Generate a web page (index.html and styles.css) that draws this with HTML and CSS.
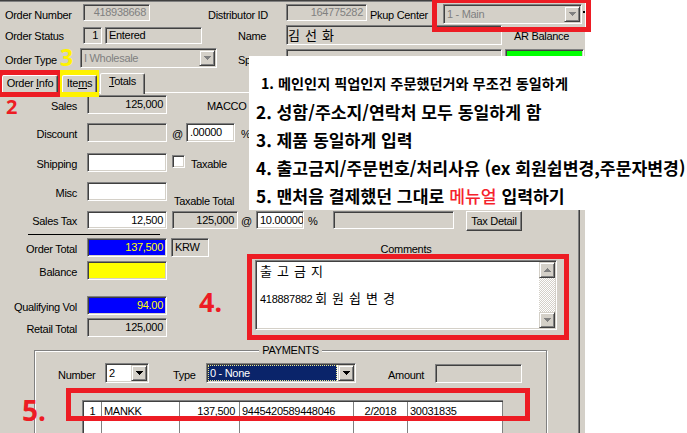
FILE: index.html
```html
<!DOCTYPE html>
<html lang="ko">
<head>
<meta charset="utf-8">
<title>Order Entry</title>
<link rel="stylesheet" href="styles.css">
</head>
<body>
<div class="page">
  <div class="app">
    <div class="strip"></div>

    <div class="hrow r1">
      <span class="lbl w-l1">Order Number</span>
      <span class="fld ro dim num w-ordno">418938668</span>
      <span class="lbl l-dist">Distributor ID</span>
      <span class="fld ro dim num w-dist">164775282</span>
      <span class="lbl l-pkup">Pkup Center</span>
      <span class="combo dis w-pkup"><span class="ctext">1 - Main</span><span class="cbtn"><svg width="7" height="4" viewBox="0 0 7 4"><path d="M0 0H7V1H6V2H5V3H4V4H3V3H2V2H1V1H0Z"/></svg></span></span>
      <span class="dash"></span>
    </div>

    <div class="hrow r2">
      <span class="lbl w-l1">Order Status</span>
      <span class="fld ro num w-st1">1</span>
      <span class="fld ro w-st2">Entered</span>
      <span class="lbl l-name">Name</span>
      <span class="fld ro tall w-name"><span class="ko">김선화</span></span>
      <span class="lbl l-ar">AR Balance</span>
    </div>

    <div class="hrow r3">
      <span class="lbl w-l3">Order Type</span>
      <span class="combo dis w-otype"><span class="ctext">I Wholesale</span><span class="cbtn"><svg width="7" height="4" viewBox="0 0 7 4"><path d="M0 0H7V1H6V2H5V3H4V4H3V3H2V2H1V1H0Z"/></svg></span></span>
      <span class="lbl l-sp">Sponsor</span>
      <span class="fld ro w-sp"></span>
      <span class="fld green w-ar"></span>
    </div>

    <div class="tabs">
      <span class="tab t1">Order <u>I</u>nfo</span>
      <span class="tab t2">Ite<u>m</u>s</span>
      <span class="tab t3 sel"><u>T</u>otals</span>
    </div>

    <div class="pane">
      <div class="frow fr-sales">
        <span class="flbl">Sales</span>
        <span class="fld ro num f-main">125,000</span>
        <span class="plain l-macco">MACCO NV</span>
      </div>
      <div class="frow fr-disc">
        <span class="flbl">Discount</span>
        <span class="fld ro f-main"></span>
        <span class="plain at1">@</span>
        <span class="fld wh w-pct">.00000</span>
        <span class="plain pct1">%</span>
      </div>
      <div class="frow fr-ship">
        <span class="flbl">Shipping</span>
        <span class="fld wh f-main"></span>
        <span class="chk"></span>
        <span class="plain l-taxable">Taxable</span>
      </div>
      <div class="frow fr-misc">
        <span class="flbl">Misc</span>
        <span class="fld wh f-main"></span>
        <span class="plain l-tt">Taxable Total</span>
      </div>
      <div class="frow fr-tax">
        <span class="flbl">Sales Tax</span>
        <span class="fld wh num f-main">12,500</span>
        <span class="fld ro num w-tt">125,000</span>
        <span class="plain at2">@</span>
        <span class="fld wh w-rate">10.00000</span>
        <span class="plain pct2">%</span>
        <span class="fld ro w-taxx"></span>
        <span class="btn w-taxd">Tax Detail</span>
      </div>
      <div class="sumline"></div>

      <div class="lower">
        <div class="lcol">
          <div class="frow fr-ot">
            <span class="flbl">Order Total</span>
            <span class="fld blue num f-main">137,500</span>
            <span class="fld ro w-cur">KRW</span>
          </div>
          <div class="frow fr-bal">
            <span class="flbl">Balance</span>
            <span class="fld yellow f-main"></span>
          </div>
          <div class="frow fr-qv">
            <span class="flbl">Qualifying Vol</span>
            <span class="fld blue num f-main">94.00</span>
          </div>
          <div class="frow fr-rt">
            <span class="flbl">Retail Total</span>
            <span class="fld ro num f-main">125,000</span>
          </div>
        </div>
        <div class="rcol">
          <div class="clbl">Comments</div>
          <div class="ta">
            <div class="ta-text">
              <div class="ta-l1"><span class="ko">출고금지</span></div>
              <div class="ta-l2">418887882 <span class="ko">회원쉽변경</span></div>
            </div>
            <div class="sb">
              <span class="sbb"><svg width="7" height="4" viewBox="0 0 7 4"><path d="M3 0H4V1H5V2H6V3H7V4H0V3H1V2H2V1H3Z"/></svg></span>
              <span class="sbt"></span>
              <span class="sbb"><svg width="7" height="4" viewBox="0 0 7 4"><path d="M0 0H7V1H6V2H5V3H4V4H3V3H2V2H1V1H0Z"/></svg></span>
            </div>
          </div>
        </div>
      </div>

      <div class="grp">
        <div class="grp-title">PAYMENTS</div>
        <div class="prow">
          <span class="lbl l-number">Number</span>
          <span class="combo w-number"><span class="ctext">2</span><span class="cbtn act"><svg width="7" height="4" viewBox="0 0 7 4"><path d="M0 0H7V1H6V2H5V3H4V4H3V3H2V2H1V1H0Z"/></svg></span></span>
          <span class="lbl l-ptype">Type</span>
          <span class="combo w-ptype"><span class="ctext selected">0 - None</span><span class="cbtn act"><svg width="7" height="4" viewBox="0 0 7 4"><path d="M0 0H7V1H6V2H5V3H4V4H3V3H2V2H1V1H0Z"/></svg></span></span>
          <span class="lbl l-amount">Amount</span>
          <span class="fld ro w-amount"></span>
        </div>
        <div class="grid">
          <span class="cell c-center">1</span>
          <span class="cell">MANKK</span>
          <span class="cell num">137,500</span>
          <span class="cell">9445420589448046</span>
          <span class="cell c-center">2/2018</span>
          <span class="cell">30031835</span>
          <span class="cell"></span>
          <span class="cell"></span>
          <span class="cell"></span>
          <span class="cell"></span>
          <span class="cell"></span>
          <span class="cell"></span>
        </div>
      </div>
    </div>
  </div>

  <div class="note">
    <div class="n n1">1. 메인인지 픽업인지 주문했던거와 무조건 동일하게</div>
    <div class="n n2">2. 성함/주소지/연락처 모두 동일하게 함</div>
    <div class="n">3. 제품 동일하게 입력</div>
    <div class="n">4. 출고금지/주문번호/처리사유 (ex 회원쉽변경,주문자변경)</div>
    <div class="n">5. 맨처음 결제했던 그대로 <span class="red">메뉴얼</span> 입력하기</div>
  </div>

  <div class="box b1"></div>
  <div class="box b2"></div>
  <div class="box yb"></div>
  <div class="box b4"></div>
  <div class="box b5"></div>

  <span class="ann a2">2</span>
  <span class="ann a3">3</span>
  <span class="ann a4">4.</span>
  <span class="ann a5">5.</span>
</div>
</body>
</html>
```

FILE: styles.css
```css
* { box-sizing: border-box; margin: 0; padding: 0; }
html, body { margin: 0; background: #fff; }

.page {
  position: relative;
  width: 687px;
  height: 433px;
  overflow: hidden;
  display: flex;
  background: #fff;
}

.app {
  width: 585px;
  height: 433px;
  flex: none;
  background: #d4d0c8;
  font-family: "Liberation Sans", Arial, sans-serif;
  font-size: 11px;
  letter-spacing: -0.3px;
  color: #000;
  overflow: hidden;
}

.strip {
  height: 2px;
  width: 432px;
  border-top: 1px solid #404040;
  border-bottom: 1px solid #808080;
}

/* ---------- generic controls ---------- */
.lbl, .plain, .flbl { white-space: nowrap; flex: none; }

.fld {
  display: block;
  flex: none;
  height: 17px;
  line-height: 15px;
  padding: 0 3px;
  border: 1px solid;
  border-color: #808080 #fff #fff #808080;
  box-shadow: inset 1px 1px 0 #404040, inset -1px -1px 0 #d4d0c8;
  white-space: nowrap;
  overflow: hidden;
}
.ro { background: #d4d0c8; }
.wh { background: #fff; }
.dim { color: #808080; }
.num { text-align: right; }
.green { background: #00ff00; }
.blue { background: #0000ff; color: #ffff00; }
.yellow { background: #ffff00; }

.combo {
  display: flex;
  flex: none;
  height: 20px;
  padding: 1px;
  border: 1px solid;
  border-color: #808080 #fff #fff #808080;
  box-shadow: inset 1px 1px 0 #404040, inset -1px -1px 0 #d4d0c8;
  background: #fff;
}
.combo.dis { background: #d4d0c8; color: #808080; }
.ctext {
  flex: 1;
  line-height: 16px;
  padding-left: 2px;
  white-space: nowrap;
  overflow: hidden;
}
.ctext.selected {
  background: #0a246a;
  color: #fff;
  outline: 1px dotted #e8e890;
  outline-offset: -1px;
  margin-right: 1px;
  padding-left: 2px;
}
.cbtn {
  width: 16px;
  height: 16px;
  flex: none;
  display: flex;
  align-items: center;
  justify-content: center;
  background: #d4d0c8;
  border: 1px solid;
  border-color: #d4d0c8 #404040 #404040 #d4d0c8;
  box-shadow: inset 1px 1px 0 #fff, inset -1px -1px 0 #808080;
  fill: #808080;
}
.cbtn.act { fill: #000; }
.cbtn svg, .sbb svg { display: block; }

.btn {
  display: block;
  flex: none;
  height: 20px;
  line-height: 18px;
  text-align: center;
  background: #d4d0c8;
  border: 1px solid;
  border-color: #fff #404040 #404040 #fff;
  box-shadow: inset -1px -1px 0 #808080;
  white-space: nowrap;
}

.ko {
  font-family: "Noto Sans CJK KR", "Noto Sans CJK SC", sans-serif;
  font-size: 13px;
  letter-spacing: 5px;
  font-weight: 400;
}

/* ---------- header rows ---------- */
.hrow { display: flex; height: 20px; align-items: flex-start; }
.r1 { margin-top: 2px; }
.r2 { margin-top: 1px; }
.r3 { margin-top: 3px; }
.hrow .lbl { line-height: 17px; padding-top: 3px; }
.r3 .lbl { padding-top: 4px; }

.w-l1 { width: 83px; padding-left: 5px; }
.w-l3 { width: 80px; padding-left: 5px; }
.w-ordno { width: 67px; }
.l-dist { margin-left: 58px; width: 78px; }
.w-dist { width: 81px; }
.l-pkup { margin-left: 3px; width: 73px; }
.w-pkup { width: 139px; }
.dash { width: 3px; height: 2px; margin: 7px 0 0 1px; background: #000; flex: none; }

.w-st1 { width: 19px; margin-top: 2px; }
.w-st2 { width: 97px; margin-top: 2px; margin-left: 3px; }
.l-name { margin-left: 36px; width: 48px; }
.tall { height: 20px; line-height: 18px; }
.w-name { width: 216px; padding-left: 1px; }
.l-ar { margin-left: 12px; }

.w-otype { width: 137px; }
.l-sp { margin-left: 21px; width: 48px; }
.w-sp { width: 216px; height: 19px; margin-top: 1px; }
.w-ar { width: 79px; height: 19px; margin-top: 1px; margin-left: 3px; }

/* ---------- tabs ---------- */
.tabs {
  display: flex;
  align-items: flex-start;
  height: 22px;
  margin-top: 2px;
  position: relative;
  z-index: 1;
}
.tab {
  display: block;
  height: 17px;
  margin-top: 5px;
  line-height: 15px;
  text-align: center;
  background: #d4d0c8;
  border: 1px solid;
  border-bottom: 0;
  border-color: #fff #404040 transparent #fff;
  box-shadow: inset -1px 0 0 #808080;
  border-radius: 2px 2px 0 0;
  white-space: nowrap;
}
.t1 { margin-left: 2px; width: 56px; }
.t2 { margin-left: 4px; width: 35px; }
.t3 { margin-left: 3px; width: 45px; }
.tab.sel { height: 21px; margin-top: 3px; }

/* ---------- totals pane ---------- */
.pane {
  width: 580px;
  height: 341px;
  border-top: 1px solid #fff;
  border-right: 1px solid #404040;
  box-shadow: inset -1px 0 0 #808080;
}
.frow { display: flex; height: 19px; align-items: flex-start; }
.frow .fld { height: 19px; line-height: 17px; }
.flbl { width: 77px; text-align: right; line-height: 19px; padding-top: 2px; }
.plain { line-height: 19px; padding-top: 2px; }
.f-main { margin-left: 10px; width: 80px; }

.fr-sales { margin-top: 2px; }
.l-macco { margin-left: 40px; width: 42px; overflow: hidden; }

.fr-disc { margin-top: 9px; }
.at1 { margin-left: 5px; width: 14px; }
.w-pct { width: 49px; }
.pct1 { margin-left: 6px; }

.fr-ship { margin-top: 11px; }
.chk {
  display: block;
  flex: none;
  width: 13px;
  height: 13px;
  margin: 2px 0 0 5px;
  background: #fff;
  border: 1px solid;
  border-color: #808080 #fff #fff #808080;
  box-shadow: inset 1px 1px 0 #404040, inset -1px -1px 0 #d4d0c8;
}
.l-taxable { margin-left: 6px; }

.fr-misc { margin-top: 10px; }
.l-tt { margin-left: 7px; padding-top: 10px; }

.fr-tax { margin-top: 10px; height: 20px; }
.fr-tax .fld { height: 18px; line-height: 16px; }
.fr-tax .flbl, .fr-tax .plain { line-height: 18px; padding-top: 1px; }
.w-tt { margin-left: 5px; width: 66px; }
.at2 { margin-left: 3px; width: 15px; }
.w-rate { width: 48px; padding: 0 1px 0 3px; }
.pct2 { margin-left: 4px; width: 9px; }
.w-taxx { margin-left: 16px; width: 121px; }
.w-taxd { margin-left: 12px; width: 56px; }

.sumline { height: 1px; width: 132px; margin: 3px 0 0 28px; background: #000; }

.lower { display: flex; margin-top: 3px; height: 99px; }
.lcol { width: 209px; flex: none; }
.w-cur { margin-left: 4px; width: 38px; }
.fr-bal { margin-top: 4px; }
.fr-qv { margin-top: 16px; }
.fr-rt { margin-top: 3px; }

.rcol { margin-left: 46px; width: 302px; flex: none; }
.clbl { margin-top: 5px; line-height: 13px; text-align: center; }
.ta {
  display: flex;
  height: 70px;
  margin-top: 4px;
  background: #fff;
  border: 1px solid;
  border-color: #808080 #fff #fff #808080;
  box-shadow: inset 1px 1px 0 #404040, inset -1px -1px 0 #d4d0c8;
  padding: 1px;
}
.ta-text { flex: 1; padding-left: 3px; }
.ta-l1 { line-height: 18px; }
.ta-l2 { line-height: 18px; margin-top: 8px; }
.sb { width: 16px; display: flex; flex-direction: column; flex: none; }
.sbb {
  height: 16px;
  flex: none;
  display: flex;
  align-items: center;
  justify-content: center;
  background: #d4d0c8;
  border: 1px solid;
  border-color: #d4d0c8 #404040 #404040 #d4d0c8;
  box-shadow: inset 1px 1px 0 #fff, inset -1px -1px 0 #808080;
  fill: #808080;
}
.sbt {
  flex: 1;
  background: repeating-conic-gradient(#fff 0 25%, #d4d0c8 0 50%) 0 0 / 2px 2px;
}

/* ---------- payments ---------- */
.grp {
  margin: 13px 0 0 34px;
  width: 513px;
  height: 110px;
  border: 1px solid #808080;
  box-shadow: inset 1px 1px 0 #fff, 1px 1px 0 #fff;
}
.grp-title {
  width: fit-content;
  margin: -7px auto 0;
  padding: 0 3px;
  line-height: 13px;
  background: #d4d0c8;
}
.prow { display: flex; height: 20px; margin-top: 6px; align-items: flex-start; }
.prow .lbl { line-height: 20px; padding-top: 2px; }
.l-number { margin-left: 23px; width: 47px; }
.w-number { width: 44px; }
.l-ptype { margin-left: 24px; width: 33px; }
.w-ptype { width: 150px; }
.l-amount { margin-left: 32px; width: 47px; }
.w-amount { width: 87px; height: 19px; margin-top: 1px; }

.grid {
  display: grid;
  grid-template-columns: 18px 78px 60px 114px 54px 95px;
  grid-auto-rows: 19px;
  width: 421px;
  margin: 17px 0 0 47px;
  padding: 1px 0 0 1px;
  background: #fff;
  border-top: 1px solid #808080;
  border-left: 1px solid #808080;
  box-shadow: inset 1px 1px 0 #404040;
}
.cell {
  display: block;
  line-height: 18px;
  padding: 0 2px;
  border-right: 1px solid #808080;
  border-bottom: 1px solid #808080;
  white-space: nowrap;
  overflow: hidden;
}
.cell.num { text-align: right; padding-right: 4px; }
.c-center { text-align: center; }

/* ---------- annotations ---------- */
.note {
  position: absolute;
  left: 249px;
  top: 56px;
  width: 438px;
  height: 154px;
  background: #fff;
  font-family: "Noto Sans CJK KR", "Noto Sans CJK SC", sans-serif;
  font-weight: 700;
  color: #000;
}
.n { margin-left: 7px; font-size: 17.2px; line-height: 28px; white-space: nowrap; }
.n1 { margin: 13px 0 0 12px; font-size: 14.2px; }
.n2 { margin-top: 1px; }
.red { color: #f5222d; font-weight: 500; }

.box { position: absolute; border: 5px solid #ed1c24; }
.b1 { left: 432px; top: -2px; width: 159px; height: 34px; }
.b2 { left: -2px; top: 70px; width: 62px; height: 27px; }
.yb { left: 60px; top: 70px; width: 39px; height: 27px; border-color: #fff200; }
.b4 { left: 247px; top: 254px; width: 322px; height: 86px; }
.b5 { left: 66px; top: 388px; width: 464px; height: 33px; }

.ann {
  position: absolute;
  font-family: "Noto Sans", "Liberation Sans", sans-serif;
  font-weight: 700;
  line-height: 1;
  color: #ed1c24;
}
.a2 { left: 6px; top: 97px; font-size: 20px; }
.a3 { left: 60px; top: 46px; font-size: 23px; color: #fff200; }
.a4 { left: 199px; top: 288px; font-size: 27px; }
.a5 { left: 22px; top: 396px; font-size: 28px; }
```
